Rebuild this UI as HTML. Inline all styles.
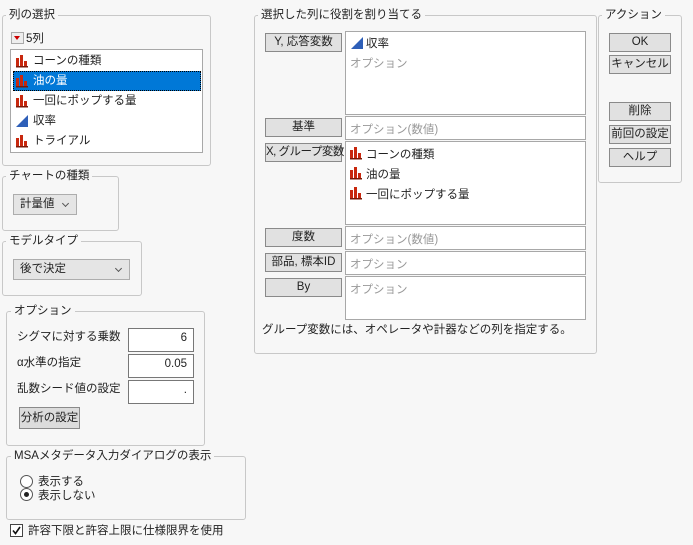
<!DOCTYPE html>
<html><head><meta charset="utf-8"><style>
body{margin:0;width:693px;height:545px;background:#f7f7f7;font-family:"Liberation Sans","Noto Sans CJK JP",sans-serif;font-size:11.5px;color:#222;position:relative;overflow:hidden}
div{white-space:nowrap}
.a{position:absolute}
.g{position:absolute;border:1px solid #c8c8c8;border-radius:3px}
.lg{position:absolute;background:#f7f7f7;padding:0 3px;line-height:14px;font-size:11.5px}
.btn{position:absolute;border:1px solid #8a8a8a;background:#e1e1e1;text-align:center;line-height:16px;font-size:11.5px;box-sizing:border-box}
.box{position:absolute;border:1px solid #a8a8a8;background:#fff;box-sizing:border-box}
.ph{color:#999}
.row{position:absolute;left:2px;height:20px;line-height:20px;padding-left:20px;width:188px;box-sizing:border-box}
.bar{position:absolute;left:3px;top:4px}
.dd{position:absolute;border:1px solid #adadad;background:#e5e5e5;box-sizing:border-box;line-height:18px;padding-left:6px}
.dd:after{content:"";position:absolute;right:8px;top:6px;width:4px;height:4px;border-right:1px solid #555;border-bottom:1px solid #555;transform:rotate(45deg)}
</style></head><body>
<svg width="0" height="0" style="position:absolute"><defs>
<g id="b"><rect x="0" y="3" width="3" height="9" fill="#c8280e"/><rect x="4" y="0" width="3" height="12" fill="#c8280e"/><rect x="8" y="6" width="3" height="6" fill="#c8280e"/><rect x="0" y="11" width="12" height="1.5" fill="#7a1a08"/></g>
<g id="t"><polygon points="0,12 12,0 12,12" fill="#2e5fb8"/></g>
</defs></svg>

<div class="g" style="left:2px;top:15px;width:207px;height:149px"></div>
<div class="lg" style="left:6px;top:8px">列の選択</div>
<div class="a" style="left:11px;top:32px;width:11px;height:10px;border:1px solid #aaa;background:#eee"></div>
<div class="a" style="left:14px;top:36px;width:0;height:0;border-left:3px solid transparent;border-right:3px solid transparent;border-top:4px solid #c00"></div>
<div class="a" style="left:26px;top:30px">5列</div>
<div class="box" style="left:10px;top:49px;width:193px;height:104px">
<div class="row" style="top:1px"><svg class="bar" width="12" height="13"><use href="#b"/></svg>コーンの種類</div>
<div class="row" style="top:21px;background:#0078d7;color:#fff;outline:1px dotted #000;outline-offset:-1px"><svg class="bar" width="12" height="13"><use href="#b"/></svg>油の量</div>
<div class="row" style="top:41px"><svg class="bar" width="12" height="13"><use href="#b"/></svg>一回にポップする量</div>
<div class="row" style="top:61px"><svg class="bar" width="12" height="13"><use href="#t"/></svg>収率</div>
<div class="row" style="top:81px"><svg class="bar" width="12" height="13"><use href="#b"/></svg>トライアル</div>
</div>

<div class="g" style="left:2px;top:176px;width:115px;height:53px"></div>
<div class="lg" style="left:6px;top:169px">チャートの種類</div>
<div class="dd" style="left:13px;top:194px;width:64px;height:21px">計量値</div>

<div class="g" style="left:2px;top:241px;width:138px;height:53px"></div>
<div class="lg" style="left:6px;top:234px">モデルタイプ</div>
<div class="dd" style="left:13px;top:259px;width:117px;height:21px">後で決定</div>

<div class="g" style="left:6px;top:311px;width:197px;height:133px"></div>
<div class="lg" style="left:11px;top:304px">オプション</div>
<div class="a" style="left:17px;top:328px">シグマに対する乗数</div>
<div class="a" style="left:17px;top:354px">α水準の指定</div>
<div class="a" style="left:17px;top:380px">乱数シード値の設定</div>
<div class="box" style="left:128px;top:328px;width:66px;height:24px;border-color:#777;text-align:right;padding:3px 6px">6</div>
<div class="box" style="left:128px;top:354px;width:66px;height:24px;border-color:#777;text-align:right;padding:3px 6px">0.05</div>
<div class="box" style="left:128px;top:380px;width:66px;height:24px;border-color:#777;text-align:right;padding:3px 6px">.</div>
<div class="btn" style="left:19px;top:407px;width:61px;height:22px;line-height:20px;background:#dcdcdc">分析の設定</div>

<div class="g" style="left:6px;top:456px;width:238px;height:62px"></div>
<div class="lg" style="left:11px;top:449px">MSAメタデータ入力ダイアログの表示</div>
<div class="a" style="left:20px;top:475px;width:11px;height:11px;border:1px solid #555;border-radius:50%;background:#fff"></div>
<div class="a" style="left:38px;top:473px">表示する</div>
<div class="a" style="left:20px;top:488px;width:11px;height:11px;border:1px solid #555;border-radius:50%;background:#fff"></div>
<div class="a" style="left:24px;top:492px;width:5px;height:5px;border-radius:50%;background:#222"></div>
<div class="a" style="left:38px;top:487px">表示しない</div>
<div class="a" style="left:10px;top:524px;width:11px;height:11px;border:1px solid #444;background:#fff"></div>
<svg class="a" style="left:11px;top:525px" width="11" height="11"><path d="M2 5.5 L4.5 8.5 L9 2" stroke="#111" stroke-width="1.6" fill="none"/></svg>
<div class="a" style="left:28px;top:522px">許容下限と許容上限に仕様限界を使用</div>

<div class="g" style="left:254px;top:15px;width:341px;height:337px"></div>
<div class="lg" style="left:258px;top:8px">選択した列に役割を割り当てる</div>
<div class="btn" style="left:265px;top:33px;width:77px;height:19px">Y, 応答変数</div>
<div class="btn" style="left:265px;top:118px;width:77px;height:19px">基準</div>
<div class="btn" style="left:265px;top:143px;width:77px;height:19px;letter-spacing:-0.5px">X, グループ変数</div>
<div class="btn" style="left:265px;top:228px;width:77px;height:19px">度数</div>
<div class="btn" style="left:265px;top:253px;width:77px;height:19px">部品, 標本ID</div>
<div class="btn" style="left:265px;top:278px;width:77px;height:19px">By</div>
<div class="box" style="left:345px;top:31px;width:241px;height:84px">
<svg class="a" style="left:5px;top:5px" width="12" height="13"><use href="#t"/></svg>
<div class="a" style="left:20px;top:3px">収率</div>
<div class="a ph" style="left:4px;top:23px">オプション</div></div>
<div class="box" style="left:345px;top:116px;width:241px;height:24px"><div class="a ph" style="left:4px;top:4px">オプション(数値)</div></div>
<div class="box" style="left:345px;top:141px;width:241px;height:84px">
<svg class="a" style="left:4px;top:5px" width="12" height="13"><use href="#b"/></svg><div class="a" style="left:20px;top:4px">コーンの種類</div>
<svg class="a" style="left:4px;top:25px" width="12" height="13"><use href="#b"/></svg><div class="a" style="left:20px;top:24px">油の量</div>
<svg class="a" style="left:4px;top:45px" width="12" height="13"><use href="#b"/></svg><div class="a" style="left:20px;top:44px">一回にポップする量</div></div>
<div class="box" style="left:345px;top:226px;width:241px;height:24px"><div class="a ph" style="left:4px;top:4px">オプション(数値)</div></div>
<div class="box" style="left:345px;top:251px;width:241px;height:24px"><div class="a ph" style="left:4px;top:4px">オプション</div></div>
<div class="box" style="left:345px;top:276px;width:241px;height:44px"><div class="a ph" style="left:4px;top:4px">オプション</div></div>
<div class="a" style="left:262px;top:321px">グループ変数には、オペレータや計器などの列を指定する。</div>

<div class="g" style="left:598px;top:15px;width:82px;height:166px"></div>
<div class="lg" style="left:602px;top:8px">アクション</div>
<div class="btn" style="left:609px;top:33px;width:62px;height:19px">OK</div>
<div class="btn" style="left:609px;top:55px;width:62px;height:19px">キャンセル</div>
<div class="btn" style="left:609px;top:102px;width:62px;height:19px">削除</div>
<div class="btn" style="left:609px;top:125px;width:62px;height:19px">前回の設定</div>
<div class="btn" style="left:609px;top:148px;width:62px;height:19px">ヘルプ</div>
</body></html>
